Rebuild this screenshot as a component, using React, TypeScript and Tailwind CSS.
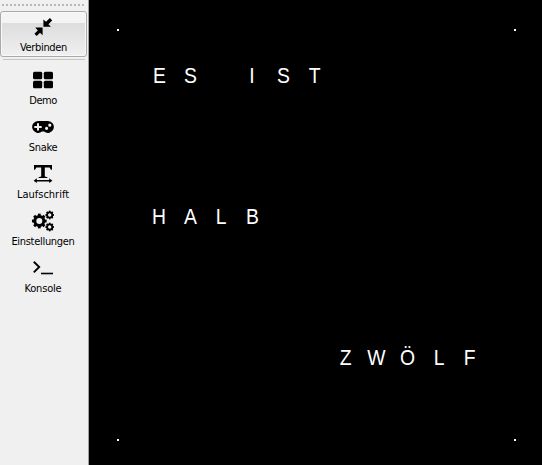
import type { ReactNode } from "react";

function ConnectIcon() {
  return (
    <svg width="24" height="24" viewBox="0 0 24 24" className="mr-[2px]">
      <path d="M12.4 11.8V4.4l2.6 2.4 3.9-3.7 2.3 2.3-3.8 3.8 2.5 2.6zM11.6 12.6v7.6L9 17.8l-3.3 3.3-2.3-2.3 3.4-3.3-2.5-2.9z" />
    </svg>
  );
}

function GridIcon() {
  return (
    <svg width="24" height="24" viewBox="0 0 24 24">
      <rect x="2" y="3.8" width="9.2" height="7.5" rx="1.5" />
      <rect x="12.8" y="3.8" width="9.2" height="7.5" rx="1.5" />
      <rect x="2" y="12.8" width="9.2" height="7.5" rx="1.5" />
      <rect x="12.8" y="12.8" width="9.2" height="7.5" rx="1.5" />
    </svg>
  );
}

function GamepadIcon() {
  return (
    <svg width="24" height="24" viewBox="0 0 24 24">
      <path
        fillRule="evenodd"
        d="M7 5.9h10a6 6 0 1 1-3.9 10.7h-2.2A6 6 0 1 1 7 5.9zM6 8.3v2.6H3.3v2H6v2.6h2v-2.6h2.7v-2H8V8.3zM15.6 11.7a1.6 1.6 0 1 0 0 3.2 1.6 1.6 0 0 0 0-3.2zM18.8 8.6a1.6 1.6 0 1 0 0 3.2 1.6 1.6 0 0 0 0-3.2z"
      />
    </svg>
  );
}

function TextWidthIcon() {
  return (
    <svg width="24" height="24" viewBox="0 0 24 24">
      <path d="M3 3h18v4.8h-1l-1.4-2.4h-4.8v9l2.6.8v.8H7.6v-.8l2.6-.8v-9H5.4L4 7.8H3z" />
      <path d="M2.6 18.7l3.2-2.4v1.6h12.4v-1.6l3.2 2.4-3.2 2.4v-1.6H5.8v1.6z" />
    </svg>
  );
}

function Gear({ cx, cy, r, w, teeth }: { cx: number; cy: number; r: number; w: number; teeth: number }) {
  return (
    <g transform={`translate(${cx} ${cy})`} fill="none" stroke="black">
      <circle r={r} strokeWidth={w} />
      {Array.from({ length: teeth }, (_, i) => (
        <path
          key={i}
          d={`M0 ${-r}V${-(r + w / 2 + w * 0.45)}`}
          strokeWidth={w * 0.95}
          transform={`rotate(${(i * 360) / teeth})`}
        />
      ))}
    </g>
  );
}

function GearsIcon() {
  return (
    <svg width="24" height="24" viewBox="0 0 24 24">
      <Gear cx={8.3} cy={12} r={4.5} w={3} teeth={8} />
      <Gear cx={18.7} cy={6} r={2.6} w={1.8} teeth={8} />
      <Gear cx={18.7} cy={18} r={2.6} w={1.8} teeth={8} />
    </svg>
  );
}

function ConsoleIcon() {
  return (
    <svg width="24" height="24" viewBox="0 0 24 24" fill="none" stroke="black">
      <path d="M2.8 5.8l5.4 5.2-5.4 5.4" strokeWidth="1.9" />
      <path d="M10 17.5h12" strokeWidth="1.6" />
    </svg>
  );
}

const tools: { label: string; icon: ReactNode; tracking: string }[] = [
  { label: "Demo", icon: <GridIcon />, tracking: "tracking-[-0.5px]" },
  { label: "Snake", icon: <GamepadIcon />, tracking: "tracking-[-0.3px]" },
  { label: "Laufschrift", icon: <TextWidthIcon />, tracking: "tracking-[0px]" },
  { label: "Einstellungen", icon: <GearsIcon />, tracking: "tracking-[-0.3px]" },
  { label: "Konsole", icon: <ConsoleIcon />, tracking: "tracking-[-0.2px]" },
];

const rows = ["ES IST", "", "", "", "HALB", "", "", "", "      ZWÖLF", ""];

function Label({ tracking, children }: { tracking: string; children: ReactNode }) {
  return <span className={`h-[14px] text-[11px] leading-[14px] whitespace-nowrap ${tracking}`}>{children}</span>;
}

function Dot() {
  return <span className="size-[2px] bg-white" />;
}

export default function App() {
  return (
    <div className="flex h-[465px] w-[542px] overflow-hidden bg-black">
      <aside className="flex w-[89px] shrink-0 flex-col border-r border-[#a0a0a0] bg-[#f0f0f0] font-['DejaVu_Sans_Condensed','DejaVu_Sans',sans-serif] text-black">
        <div className="mt-[4px] mr-[2px] ml-[2px] h-[2px] bg-[repeating-linear-gradient(90deg,#b8b8b8_0_2px,transparent_2px_4px)]" />
        <button className="mt-[5px] flex h-[46px] w-[87px] flex-col items-center rounded-[3px] border border-[#aaaaaa] bg-linear-to-b from-[#f4f4f4] from-25% via-[#dddddd] via-25% to-[#f0f0f0] pt-[3px] shadow-[inset_0_0_0_1px_#f8f8f8]">
          <ConnectIcon />
          <span className="mt-[2px] flex">
            <Label tracking="tracking-[-0.35px]">Verbinden</Label>
          </span>
        </button>
        <div className="mt-[2px] mr-[3px] ml-[3px] h-px bg-[#c5c5c5]" />
        <nav className="mt-[8px] flex w-[86px] flex-col">
          {tools.map((t) => (
            <button key={t.label} className="flex h-[47px] flex-col items-center">
              {t.icon}
              <span className="mt-[2px] flex">
                <Label tracking={t.tracking}>{t.label}</Label>
              </span>
            </button>
          ))}
        </nav>
      </aside>
      <main className="flex flex-1 flex-col pt-[29px] pr-[26px] pb-[24px] pl-[28px]">
        <div className="flex justify-between">
          <Dot />
          <Dot />
        </div>
        <div className="mt-[27px] ml-[26.6px] grid w-[342.1px] grid-cols-11 grid-rows-10 font-['Liberation_Sans',Arial,sans-serif] text-[22px] text-white">
          {rows.flatMap((row, y) =>
            Array.from({ length: 11 }, (_, x) => (
              <span key={`${y}-${x}`} className="flex h-[35.25px] items-center justify-center leading-none">
                <span className="scale-x-[0.88]">{row[x] ?? ""}</span>
              </span>
            )),
          )}
        </div>
        <div className="mt-auto flex justify-between">
          <Dot />
          <Dot />
        </div>
      </main>
    </div>
  );
}
